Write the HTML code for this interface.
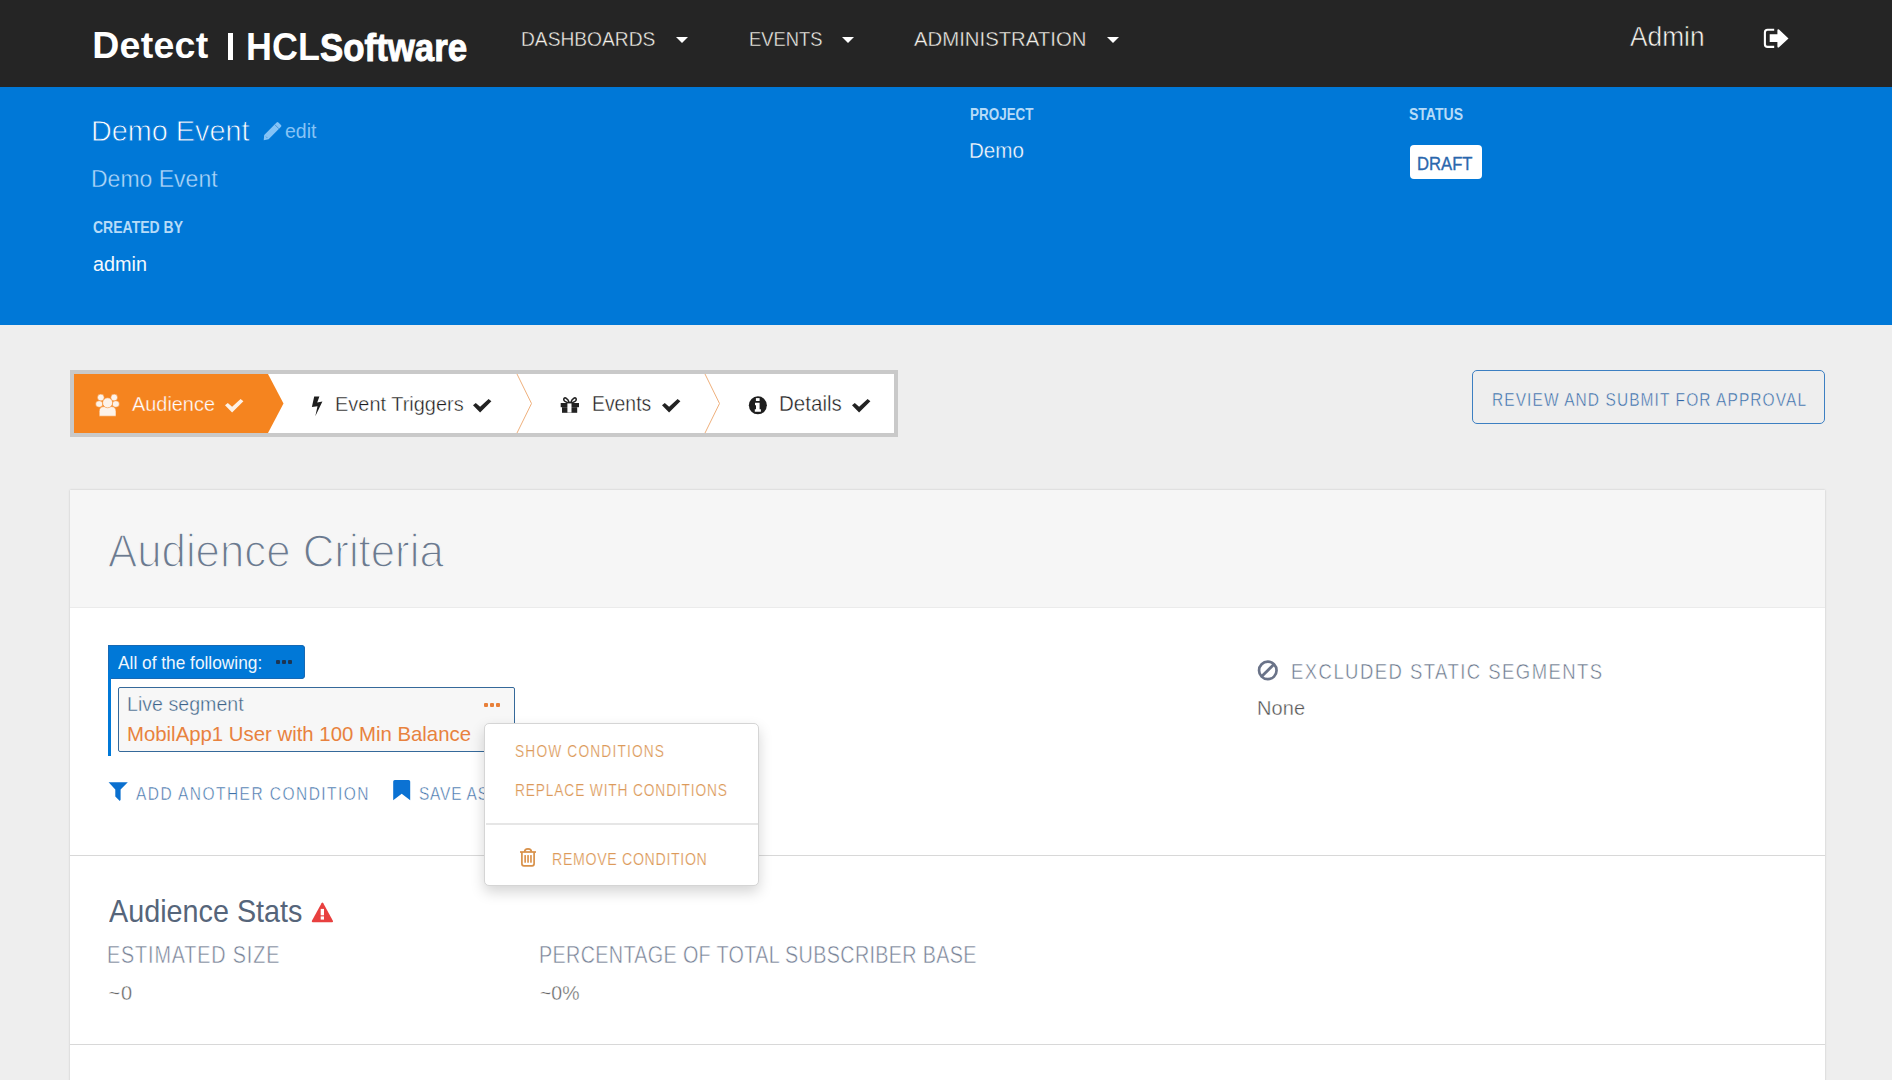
<!DOCTYPE html>
<html><head><meta charset="utf-8"><title>Detect</title>
<style>
html,body{margin:0;padding:0;width:1892px;height:1080px;overflow:hidden;background:#eeeeee;font-family:"Liberation Sans",sans-serif}
.t{position:absolute;white-space:nowrap}
svg{overflow:visible}
</style></head><body>
<div style="position:absolute;left:0;top:0;width:1892px;height:87px;background:#252525"></div>
<div class="t" style="left:92.20px;top:27.26px;font-size:37.50px;line-height:37.50px;color:#fff;font-weight:bold;letter-spacing:0.275px;">Detect</div>
<div style="position:absolute;left:228px;top:32.5px;width:4.5px;height:27.5px;background:#fff"></div>
<div class="t" style="left:246.00px;top:27.49px;font-size:39.00px;line-height:39.00px;color:#fff;font-weight:bold;letter-spacing:0.000px;transform:scaleX(0.9211);transform-origin:0.00px 0;">HCL</div>
<div class="t" style="left:320.30px;top:27.79px;font-size:39.00px;line-height:39.00px;color:#fff;font-weight:bold;letter-spacing:0.000px;transform:scaleX(0.8935);transform-origin:0.00px 0;-webkit-text-stroke:1px #fff;">Software</div>
<div class="t" style="left:520.60px;top:29.49px;font-size:20.80px;line-height:20.80px;color:#f4f1ea;font-weight:normal;letter-spacing:0.000px;transform:scaleX(0.9225);transform-origin:0.00px 0;-webkit-text-stroke:0.4px #252525;">DASHBOARDS</div>
<div class="t" style="left:748.60px;top:29.49px;font-size:20.80px;line-height:20.80px;color:#f4f1ea;font-weight:normal;letter-spacing:0.000px;transform:scaleX(0.8819);transform-origin:0.00px 0;-webkit-text-stroke:0.4px #252525;">EVENTS</div>
<div class="t" style="left:914.40px;top:29.49px;font-size:20.80px;line-height:20.80px;color:#f4f1ea;font-weight:normal;letter-spacing:0.000px;transform:scaleX(0.9773);transform-origin:0.00px 0;-webkit-text-stroke:0.4px #252525;">ADMINISTRATION</div>
<div style="position:absolute;left:676px;top:37px;width:0;height:0;border-left:6px solid transparent;border-right:6px solid transparent;border-top:6px solid #fff"></div>
<div style="position:absolute;left:842px;top:37px;width:0;height:0;border-left:6px solid transparent;border-right:6px solid transparent;border-top:6px solid #fff"></div>
<div style="position:absolute;left:1107px;top:37px;width:0;height:0;border-left:6px solid transparent;border-right:6px solid transparent;border-top:6px solid #fff"></div>
<div class="t" style="left:1629.50px;top:22.07px;font-size:28.50px;line-height:28.50px;color:#fbf8f2;font-weight:normal;letter-spacing:0.000px;transform:scaleX(0.9226);transform-origin:0.00px 0;-webkit-text-stroke:0.6px #252525;">Admin</div>
<svg style="position:absolute;left:0;top:0" width="1892" height="87">
<path d="M1774.2 29.8 H1767.6 Q1764.9 29.8 1764.9 32.5 V44.2 Q1764.9 46.9 1767.6 46.9 H1774.2" fill="none" stroke="#fff" stroke-width="2.1"/>
<path d="M1769.7 34.3 H1777.4 V30.2 Q1777.6 28.6 1779 29.6 L1788.5 38.5 L1779 47.2 Q1777.6 48.3 1777.4 46.6 V42.1 H1769.7 Z" fill="#fff"/>
</svg>
<div style="position:absolute;left:0;top:87px;width:1892px;height:238px;background:#0078d7"></div>
<div class="t" style="left:91.20px;top:115.61px;font-size:30.00px;line-height:30.00px;color:#ffffff;font-weight:normal;letter-spacing:0.000px;transform:scaleX(0.9599);transform-origin:0.00px 0;-webkit-text-stroke:0.8px #0078d7;">Demo Event</div>
<svg style="position:absolute;left:0;top:0" width="300" height="200">
<path d="M276.6 122.4 Q277.5 121.5 278.4 122.4 L281 125 Q281.9 125.9 281 126.8 L268.6 139.2 L263.7 140.3 L264.2 135 Z" fill="#84c3f6"/>
<path d="M274.6 124.4 L279 128.8" stroke="#3d8fd6" stroke-width="0.9"/>
<path d="M266 136.6 L267.3 137.9" stroke="#3d8fd6" stroke-width="0.9"/>
</svg>
<div class="t" style="left:284.60px;top:121.05px;font-size:20.50px;line-height:20.50px;color:#86c3f5;font-weight:normal;letter-spacing:0.000px;transform:scaleX(0.9515);transform-origin:0.00px 0;">edit</div>
<div class="t" style="left:91.20px;top:166.86px;font-size:24.50px;line-height:24.50px;color:#b0d8fa;font-weight:normal;letter-spacing:0.000px;transform:scaleX(0.9388);transform-origin:0.00px 0;-webkit-text-stroke:0.4px #0078d7;">Demo Event</div>
<div class="t" style="left:93.00px;top:218.73px;font-size:16.50px;line-height:16.50px;color:#b6dbf8;font-weight:bold;letter-spacing:0.000px;transform:scaleX(0.8491);transform-origin:0.00px 0;">CREATED BY</div>
<div class="t" style="left:93.00px;top:253.65px;font-size:20.50px;line-height:20.50px;color:#f4f9fd;font-weight:normal;letter-spacing:0.000px;transform:scaleX(0.9664);transform-origin:0.00px 0;">admin</div>
<div class="t" style="left:969.50px;top:106.41px;font-size:17.00px;line-height:17.00px;color:#b6dbf8;font-weight:bold;letter-spacing:0.000px;transform:scaleX(0.7913);transform-origin:0.00px 0;">PROJECT</div>
<div class="t" style="left:969.00px;top:139.58px;font-size:22.00px;line-height:22.00px;color:#ffffff;font-weight:normal;letter-spacing:0.000px;transform:scaleX(0.9362);transform-origin:0.00px 0;-webkit-text-stroke:0.4px #0078d7;">Demo</div>
<div class="t" style="left:1409.00px;top:106.41px;font-size:17.00px;line-height:17.00px;color:#b6dbf8;font-weight:bold;letter-spacing:0.000px;transform:scaleX(0.8244);transform-origin:0.00px 0;">STATUS</div>
<div style="position:absolute;left:1410px;top:145px;width:72px;height:34px;background:#fff;border-radius:4px"></div>
<div class="t" style="left:1416.80px;top:154.54px;font-size:18.50px;line-height:18.50px;color:#2a67ad;font-weight:normal;letter-spacing:0.000px;transform:scaleX(0.9006);transform-origin:0.00px 0;-webkit-text-stroke:0.35px #2a67ad;">DRAFT</div>
<div style="position:absolute;left:0;top:325px;width:1892px;height:755px;background:#eeeeee"></div>
<div style="position:absolute;left:70px;top:370px;width:820px;height:59px;border:4px solid #c9c9c9;background:#fff"></div>
<svg style="position:absolute;left:0;top:0" width="1000" height="450">
<polygon points="74,374 268,374 283.5,403.5 268,433 74,433" fill="#f5841f"/>
<polyline points="517,374 531.5,403.5 517,433" fill="none" stroke="#efb07c" stroke-width="1"/>
<polyline points="705,374 719.5,403.5 705,433" fill="none" stroke="#efb07c" stroke-width="1"/>
</svg>
<svg style="position:absolute;left:90px;top:390px" width="35" height="30" viewBox="0 0 35 30">
<g fill="#fdf3ea" stroke="#f5841f" stroke-width="0.55">
<circle cx="10.8" cy="7.5" r="3.4"/><circle cx="24.2" cy="7.5" r="3.4"/>
<ellipse cx="9.2" cy="14" rx="3.6" ry="3.3"/><ellipse cx="25.8" cy="14" rx="3.6" ry="3.3"/>
<path d="M9.2 26.2 V21.5 Q9.2 16.6 14 16.6 H21.2 Q26 16.6 26 21.5 V26.2 Z"/>
<circle cx="17.6" cy="12.8" r="5"/>
</g></svg>
<div class="t" style="left:131.60px;top:392.92px;font-size:21.00px;line-height:21.00px;color:#ffffff;font-weight:normal;letter-spacing:0.000px;transform:scaleX(0.9472);transform-origin:0.00px 0;-webkit-text-stroke:0.35px #f5841f;">Audience</div>
<svg style="position:absolute;left:224.5px;top:399px" width="19" height="14" viewBox="0 0 19 14"><polygon points="0,6.2 2.8,3.9 7.1,7.7 15.6,0 18.4,2.2 7.1,13.4" fill="#fdf1e6"/></svg>
<svg style="position:absolute;left:0;top:0" width="400" height="450">
<path d="M314.2 396.6 L319.4 396.6 L317.2 402.6 L322.4 401.6 L315.3 416.2 L317.5 406.2 L311.9 407 Z" fill="#1e1e1e"/></svg>
<div class="t" style="left:334.60px;top:392.92px;font-size:21.00px;line-height:21.00px;color:#1c1c1c;font-weight:normal;letter-spacing:0.000px;transform:scaleX(0.9500);transform-origin:0.00px 0;-webkit-text-stroke:0.4px #fff;">Event Triggers</div>
<svg style="position:absolute;left:473.3px;top:399.2px" width="19" height="14" viewBox="0 0 19 14"><polygon points="0,6.2 2.8,3.9 7.1,7.7 15.6,0 18.4,2.2 7.1,13.4" fill="#222"/></svg>
<svg style="position:absolute;left:560px;top:396px" width="20" height="18" viewBox="0 0 20 18">
<g fill="#222">
<path d="M9.5 7 C7.5 1.5 3.5 0.5 3.8 3.8 C4 6 7 6.5 9.5 7Z M10.5 7 C12.5 1.5 16.5 0.5 16.2 3.8 C16 6 13 6.5 10.5 7Z" fill="none" stroke="#222" stroke-width="1.6"/>
<rect x="0.7" y="7" width="18.3" height="4.2"/>
<rect x="2" y="11.2" width="15.2" height="5.6"/>
</g>
<rect x="7.4" y="7.4" width="4.1" height="9.2" fill="#fff"/>
</svg>
<div class="t" style="left:592.20px;top:392.88px;font-size:22.00px;line-height:22.00px;color:#1c1c1c;font-weight:normal;letter-spacing:0.000px;transform:scaleX(0.8803);transform-origin:0.00px 0;-webkit-text-stroke:0.4px #fff;">Events</div>
<svg style="position:absolute;left:661.8px;top:399px" width="19" height="14" viewBox="0 0 19 14"><polygon points="0,6.2 2.8,3.9 7.1,7.7 15.6,0 18.4,2.2 7.1,13.4" fill="#222"/></svg>
<svg style="position:absolute;left:0;top:0" width="900" height="450">
<circle cx="757.85" cy="405.35" r="9" fill="#1e1e1e"/>
<rect x="755.9" y="398.1" width="3.7" height="2.9" fill="#fff"/>
<path d="M755 402.8 H759.6 V409.3 H760.9 V411.8 H754.8 V409.3 H756 V405.3 H755 Z" fill="#fff"/>
</svg>
<div class="t" style="left:778.60px;top:393.18px;font-size:22.00px;line-height:22.00px;color:#1c1c1c;font-weight:normal;letter-spacing:0.000px;transform:scaleX(0.9338);transform-origin:0.00px 0;-webkit-text-stroke:0.4px #fff;">Details</div>
<svg style="position:absolute;left:851.8px;top:399px" width="19" height="14" viewBox="0 0 19 14"><polygon points="0,6.2 2.8,3.9 7.1,7.7 15.6,0 18.4,2.2 7.1,13.4" fill="#222"/></svg>
<div style="position:absolute;left:1472px;top:370px;width:350.5px;height:51.5px;border:1.5px solid #3c7fc2;border-radius:5px"></div>
<div class="t" style="left:1492.30px;top:391.26px;font-size:18.00px;line-height:18.00px;color:#2f66a6;font-weight:normal;letter-spacing:1.267px;transform:scaleX(0.8600);transform-origin:0.00px 0;-webkit-text-stroke:0.45px #eeeeee;">REVIEW AND SUBMIT FOR APPROVAL</div>
<div style="position:absolute;left:70px;top:490px;width:1755px;height:600px;background:#fff;box-shadow:0 0 2px rgba(0,0,0,0.18)"></div>
<div style="position:absolute;left:70px;top:490px;width:1755px;height:117px;background:#f6f6f6;border-bottom:1px solid #ebebeb"></div>
<div class="t" style="left:108.40px;top:527.76px;font-size:46.00px;line-height:46.00px;color:#6b7a8f;font-weight:normal;letter-spacing:0.000px;transform:scaleX(0.9516);transform-origin:0.00px 0;-webkit-text-stroke:1.4px #f6f6f6;">Audience Criteria</div>
<div style="position:absolute;left:70px;top:855px;width:1755px;height:1px;background:#d8d8d8"></div>
<div style="position:absolute;left:70px;top:1044px;width:1755px;height:1px;background:#d8d8d8"></div>
<div style="position:absolute;left:108px;top:645px;width:196.5px;height:33.5px;background:#0078d7;border-radius:0 4px 4px 0;box-shadow:inset 0 0 0 1px #1769b4"></div>
<div style="position:absolute;left:108px;top:670px;width:3px;height:86px;background:#0078d7"></div>
<div class="t" style="left:118.40px;top:654.14px;font-size:18.50px;line-height:18.50px;color:#eef6fd;font-weight:normal;letter-spacing:0.000px;transform:scaleX(0.9348);transform-origin:0.00px 0;">All of the following:</div>
<div style="position:absolute;left:276px;top:659.5px;width:4.2px;height:4.2px;border-radius:1px;background:#1c3553"></div><div style="position:absolute;left:282px;top:659.5px;width:4.2px;height:4.2px;border-radius:1px;background:#1c3553"></div><div style="position:absolute;left:288px;top:659.5px;width:4.2px;height:4.2px;border-radius:1px;background:#1c3553"></div>
<div style="position:absolute;left:118px;top:687px;width:394.8px;height:62.6px;border:1.2px solid #35699a;border-radius:2px;background:#f7f7f7"></div>
<div class="t" style="left:127.00px;top:693.65px;font-size:20.50px;line-height:20.50px;color:#3d6388;font-weight:normal;letter-spacing:0.000px;transform:scaleX(0.9567);transform-origin:0.00px 0;-webkit-text-stroke:0.4px #f7f7f7;">Live segment</div>
<div style="position:absolute;left:483.5px;top:702.5px;width:4.2px;height:4.2px;border-radius:1px;background:#e8803a"></div><div style="position:absolute;left:489.5px;top:702.5px;width:4.2px;height:4.2px;border-radius:1px;background:#e8803a"></div><div style="position:absolute;left:495.5px;top:702.5px;width:4.2px;height:4.2px;border-radius:1px;background:#e8803a"></div>
<div class="t" style="left:127.00px;top:723.42px;font-size:21.00px;line-height:21.00px;color:#e8823e;font-weight:normal;letter-spacing:0.000px;transform:scaleX(0.9694);transform-origin:0.00px 0;">MobilApp1 User with 100 Min Balance</div>
<svg style="position:absolute;left:0;top:0" width="200" height="900">
<path d="M108.6 782.2 H127.8 L120.6 789.6 V799.8 L119.8 800.9 L115.3 796.5 V789.6 Z" fill="#0b70cf"/></svg>
<div class="t" style="left:136.00px;top:785.26px;font-size:18.00px;line-height:18.00px;color:#3d6fa8;font-weight:normal;letter-spacing:1.717px;transform:scaleX(0.8600);transform-origin:0.00px 0;-webkit-text-stroke:0.45px #fff;">ADD ANOTHER CONDITION</div>
<svg style="position:absolute;left:0;top:0" width="500" height="900">
<path d="M393.2 781.6 Q393.2 780 394.8 780 H408.6 Q410.2 780 410.2 781.6 V800.2 L401.7 793.8 L393.2 800.2 Z" fill="#0b72d3"/></svg>
<div class="t" style="left:418.50px;top:785.26px;font-size:18.00px;line-height:18.00px;color:#3d6fa8;font-weight:normal;letter-spacing:0.914px;transform:scaleX(0.8600);transform-origin:0.00px 0;-webkit-text-stroke:0.45px #fff;">SAVE AS</div>
<svg style="position:absolute;left:0;top:0" width="1300" height="700">
<circle cx="1267.8" cy="670.4" r="8.75" fill="none" stroke="#6a7388" stroke-width="2.7"/>
<path d="M1261.6 676.6 L1274 664.2" stroke="#6a7388" stroke-width="2.8"/></svg>
<div class="t" style="left:1291.20px;top:661.60px;font-size:21.50px;line-height:21.50px;color:#6a778b;font-weight:normal;letter-spacing:1.690px;transform:scaleX(0.8600);transform-origin:0.00px 0;-webkit-text-stroke:0.5px #fff;">EXCLUDED STATIC SEGMENTS</div>
<div class="t" style="left:1257.00px;top:698.07px;font-size:20.00px;line-height:20.00px;color:#555;font-weight:normal;letter-spacing:0.108px;-webkit-text-stroke:0.35px #fff;">None</div>
<div class="t" style="left:108.60px;top:894.91px;font-size:32.00px;line-height:32.00px;color:#56657a;font-weight:normal;letter-spacing:0.000px;transform:scaleX(0.8985);transform-origin:0.00px 0;">Audience Stats</div>
<svg style="position:absolute;left:0;top:0" width="400" height="1000">
<path d="M322.4 902.6 Q322.9 902.6 323.3 903.3 L333 921 Q333.2 922.3 332 922.3 H312.8 Q311.6 922.3 311.8 921 L321.5 903.3 Q321.9 902.6 322.4 902.6 Z" fill="#e8403f"/>
<rect x="320.7" y="908.9" width="3.3" height="6.4" fill="#fff"/><rect x="320.7" y="916.4" width="3.3" height="3.2" fill="#fff"/></svg>
<div class="t" style="left:107.40px;top:943.73px;font-size:23.00px;line-height:23.00px;color:#778296;font-weight:normal;letter-spacing:0.998px;transform:scaleX(0.8600);transform-origin:0.00px 0;-webkit-text-stroke:0.5px #fff;">ESTIMATED SIZE</div>
<div class="t" style="left:539.00px;top:943.73px;font-size:23.00px;line-height:23.00px;color:#778296;font-weight:normal;letter-spacing:0.378px;transform:scaleX(0.8600);transform-origin:0.00px 0;-webkit-text-stroke:0.5px #fff;">PERCENTAGE OF TOTAL SUBSCRIBER BASE</div>
<div class="t" style="left:108.50px;top:983.07px;font-size:20.00px;line-height:20.00px;color:#666;font-weight:normal;letter-spacing:0.750px;-webkit-text-stroke:0.35px #fff;">~0</div>
<div class="t" style="left:539.50px;top:983.07px;font-size:20.00px;line-height:20.00px;color:#666;font-weight:normal;letter-spacing:0.000px;transform:scaleX(0.9723);transform-origin:0.00px 0;-webkit-text-stroke:0.35px #fff;">~0%</div>
<div style="position:absolute;left:484px;top:723px;width:272.5px;height:160.5px;background:#fff;border:1px solid #d5d5d5;border-radius:5px;box-shadow:0 6px 14px rgba(0,0,0,0.17)"></div>
<div class="t" style="left:515.40px;top:743.66px;font-size:16.00px;line-height:16.00px;color:#dc9a5a;font-weight:normal;letter-spacing:1.331px;transform:scaleX(0.8600);transform-origin:0.00px 0;-webkit-text-stroke:0.2px #fff;">SHOW CONDITIONS</div>
<div class="t" style="left:515.40px;top:782.66px;font-size:16.00px;line-height:16.00px;color:#dc9a5a;font-weight:normal;letter-spacing:0.983px;transform:scaleX(0.8600);transform-origin:0.00px 0;-webkit-text-stroke:0.2px #fff;">REPLACE WITH CONDITIONS</div>
<div style="position:absolute;left:485.5px;top:823px;width:272px;height:2px;background:#e6e6e6"></div>
<svg style="position:absolute;left:0;top:0" width="600" height="900">
<g fill="none" stroke="#d8914a" stroke-width="1.7">
<path d="M520 852 H536"/>
<path d="M524.6 852 Q524.6 848.8 528 848.8 Q531.4 848.8 531.4 852"/>
<path d="M521.9 852 V863.8 Q521.9 865.8 523.9 865.8 H532.1 Q534.1 865.8 534.1 863.8 V852"/>
</g>
<g fill="#dc9550"><rect x="524.3" y="855.1" width="1.7" height="7.6"/><rect x="527.2" y="855.1" width="1.7" height="7.6"/><rect x="530.1" y="855.1" width="1.7" height="7.6"/></g>
</svg>
<div class="t" style="left:552.30px;top:851.03px;font-size:16.50px;line-height:16.50px;color:#dc9a5a;font-weight:normal;letter-spacing:0.758px;transform:scaleX(0.8600);transform-origin:0.00px 0;-webkit-text-stroke:0.2px #fff;">REMOVE CONDITION</div>
</body></html>
